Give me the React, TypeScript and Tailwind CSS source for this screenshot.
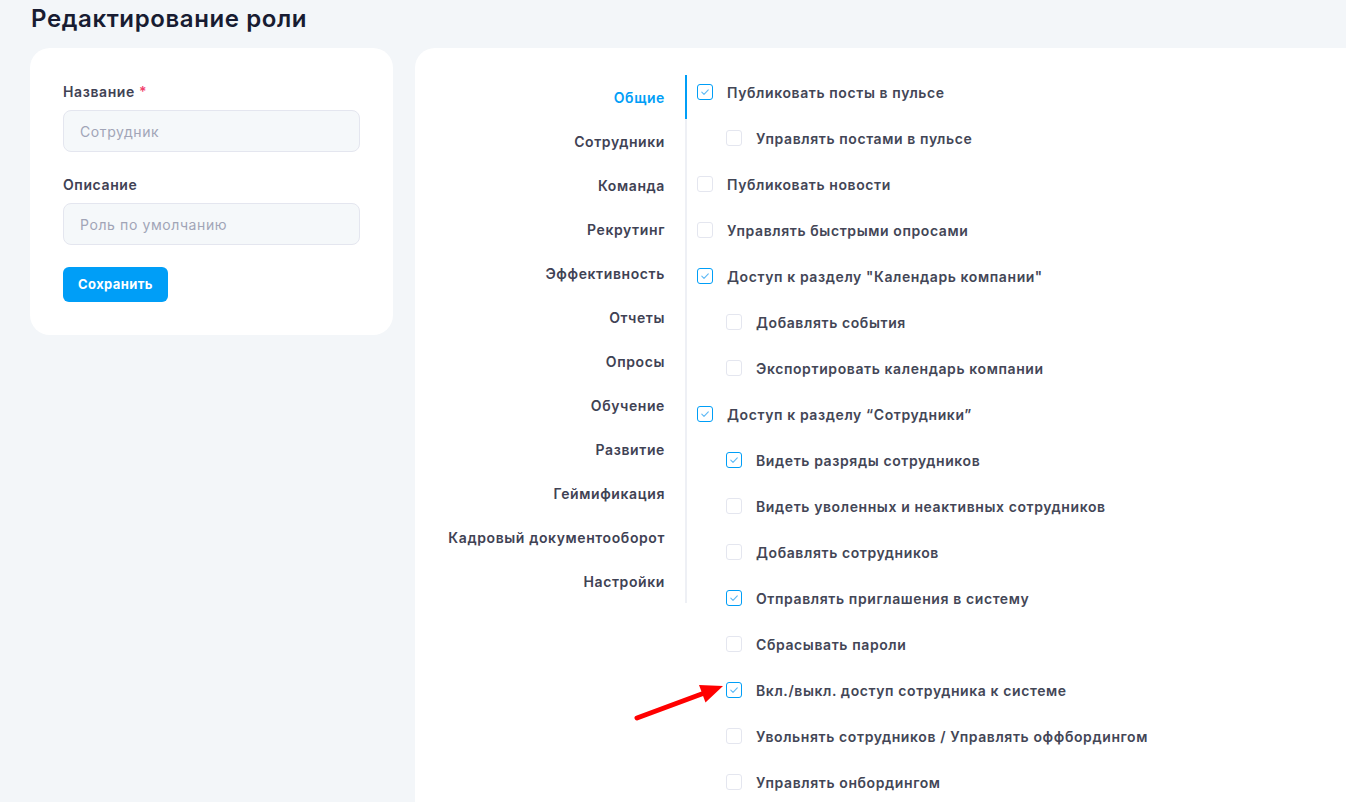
import React from 'react';

type Permission = {
  label: string;
  checked: boolean;
  nested?: boolean;
};

const SECTIONS = [
  'Общие',
  'Сотрудники',
  'Команда',
  'Рекрутинг',
  'Эффективность',
  'Отчеты',
  'Опросы',
  'Обучение',
  'Развитие',
  'Геймификация',
  'Кадровый документооборот',
  'Настройки',
];

const PERMISSIONS: Permission[] = [
  { label: 'Публиковать посты в пульсе', checked: true },
  { label: 'Управлять постами в пульсе', checked: false, nested: true },
  { label: 'Публиковать новости', checked: false },
  { label: 'Управлять быстрыми опросами', checked: false },
  { label: 'Доступ к разделу "Календарь компании"', checked: true },
  { label: 'Добавлять события', checked: false, nested: true },
  { label: 'Экспортировать календарь компании', checked: false, nested: true },
  { label: 'Доступ к разделу “Сотрудники”', checked: true },
  { label: 'Видеть разряды сотрудников', checked: true, nested: true },
  { label: 'Видеть уволенных и неактивных сотрудников', checked: false, nested: true },
  { label: 'Добавлять сотрудников', checked: false, nested: true },
  { label: 'Отправлять приглашения в систему', checked: true, nested: true },
  { label: 'Сбрасывать пароли', checked: false, nested: true },
  { label: 'Вкл./выкл. доступ сотрудника к системе', checked: true, nested: true },
  { label: 'Увольнять сотрудников / Управлять оффбордингом', checked: false, nested: true },
  { label: 'Управлять онбордингом', checked: false, nested: true },
];

function Checkbox({ checked }: { checked: boolean }) {
  return (
    <span
      className={`w-4 h-4 shrink-0 rounded-[3px] border bg-white flex items-center justify-center ${
        checked ? 'border-[#009ef7]' : 'border-[#e4e6ef]'
      }`}
    >
      {checked && (
        <svg width="10" height="10" viewBox="0 0 10 10" fill="none">
          <path d="M1.8 5.2 L4 7.3 L8.3 2.8" stroke="#5cb8f5" strokeWidth="1.1" strokeLinecap="round" strokeLinejoin="round" />
        </svg>
      )}
    </span>
  );
}

function App() {
  const activeSection = 'Общие';

  return (
    <div
      className="relative h-screen w-full overflow-hidden bg-[#f3f6f9] text-[#3f4254] tracking-[0.6px]"
      style={{ fontFamily: 'Inter, "Noto Sans", sans-serif' }}
    >
      {/* Page title */}
      <h1 className="pl-[31px] pt-[3px] text-[24px] leading-[32px] font-semibold text-[#181c32] tracking-[0.6px]">
        Редактирование роли
      </h1>

      <div className="flex items-start gap-[22px] pl-[30px] mt-[13px]">
        {/* Role form card */}
        <div className="w-[363px] shrink-0 bg-white rounded-[20px] px-[33px] pt-[34px] pb-[33px]">
          <label className="block text-[14px] leading-[20px] font-semibold text-[#3f4254] mb-2">
            Название <span className="text-[#f1416c]">*</span>
          </label>
          <input
            readOnly
            placeholder="Сотрудник"
            className="w-full h-[42px] rounded-[8px] border border-[#e4e6ef] bg-[#f5f8fa] px-4 text-[14px] tracking-[0.6px] placeholder:text-[#a1a5b7] outline-none"
          />

          <label className="block mt-[23px] text-[14px] leading-[20px] font-semibold text-[#3f4254] mb-2">
            Описание
          </label>
          <input
            readOnly
            placeholder="Роль по умолчанию"
            className="w-full h-[42px] rounded-[8px] border border-[#e4e6ef] bg-[#f5f8fa] px-4 text-[14px] tracking-[0.6px] placeholder:text-[#a1a5b7] outline-none"
          />

          <button className="mt-[22px] h-[35px] px-[15px] rounded-[6px] bg-[#009ef7] text-white text-[13px] font-bold tracking-[0.4px]">
            Сохранить
          </button>
        </div>

        {/* Permissions panel */}
        <div className="flex-1 h-[800px] bg-white rounded-tl-[20px] flex items-start pt-[21px]">
          <nav className="w-[272px] shrink-0 mt-[6px] flex flex-col">
            {SECTIONS.map(s => (
              <div
                key={s}
                className={`h-[44px] flex items-center justify-end pr-[20px] border-r-2 text-[14px] font-semibold ${
                  s === activeSection
                    ? 'border-[#009ef7] text-[#009ef7]'
                    : 'border-[#eef0f5] text-[#3f4254]'
                }`}
              >
                {s}
              </div>
            ))}
          </nav>

          <div className="flex flex-col">
            {PERMISSIONS.map(p => (
              <div
                key={p.label}
                className={`h-[46px] flex items-center gap-[14px] ${p.nested ? 'pl-[39px]' : 'pl-[10px]'}`}
              >
                <Checkbox checked={p.checked} />
                <span className="text-[14px] font-semibold text-[#434656] whitespace-nowrap">{p.label}</span>
              </div>
            ))}
          </div>
        </div>
      </div>

      {/* Red pointer arrow */}
      <svg className="absolute left-[630px] top-[675px]" width="100" height="50" viewBox="0 0 100 50">
        <line x1="7" y1="43" x2="73" y2="18.5" stroke="#f00" strokeWidth="5" strokeLinecap="round" />
        <polygon points="93,11 75.5,27.5 69,10" fill="#f00" />
      </svg>
    </div>
  );
}

export default App;
